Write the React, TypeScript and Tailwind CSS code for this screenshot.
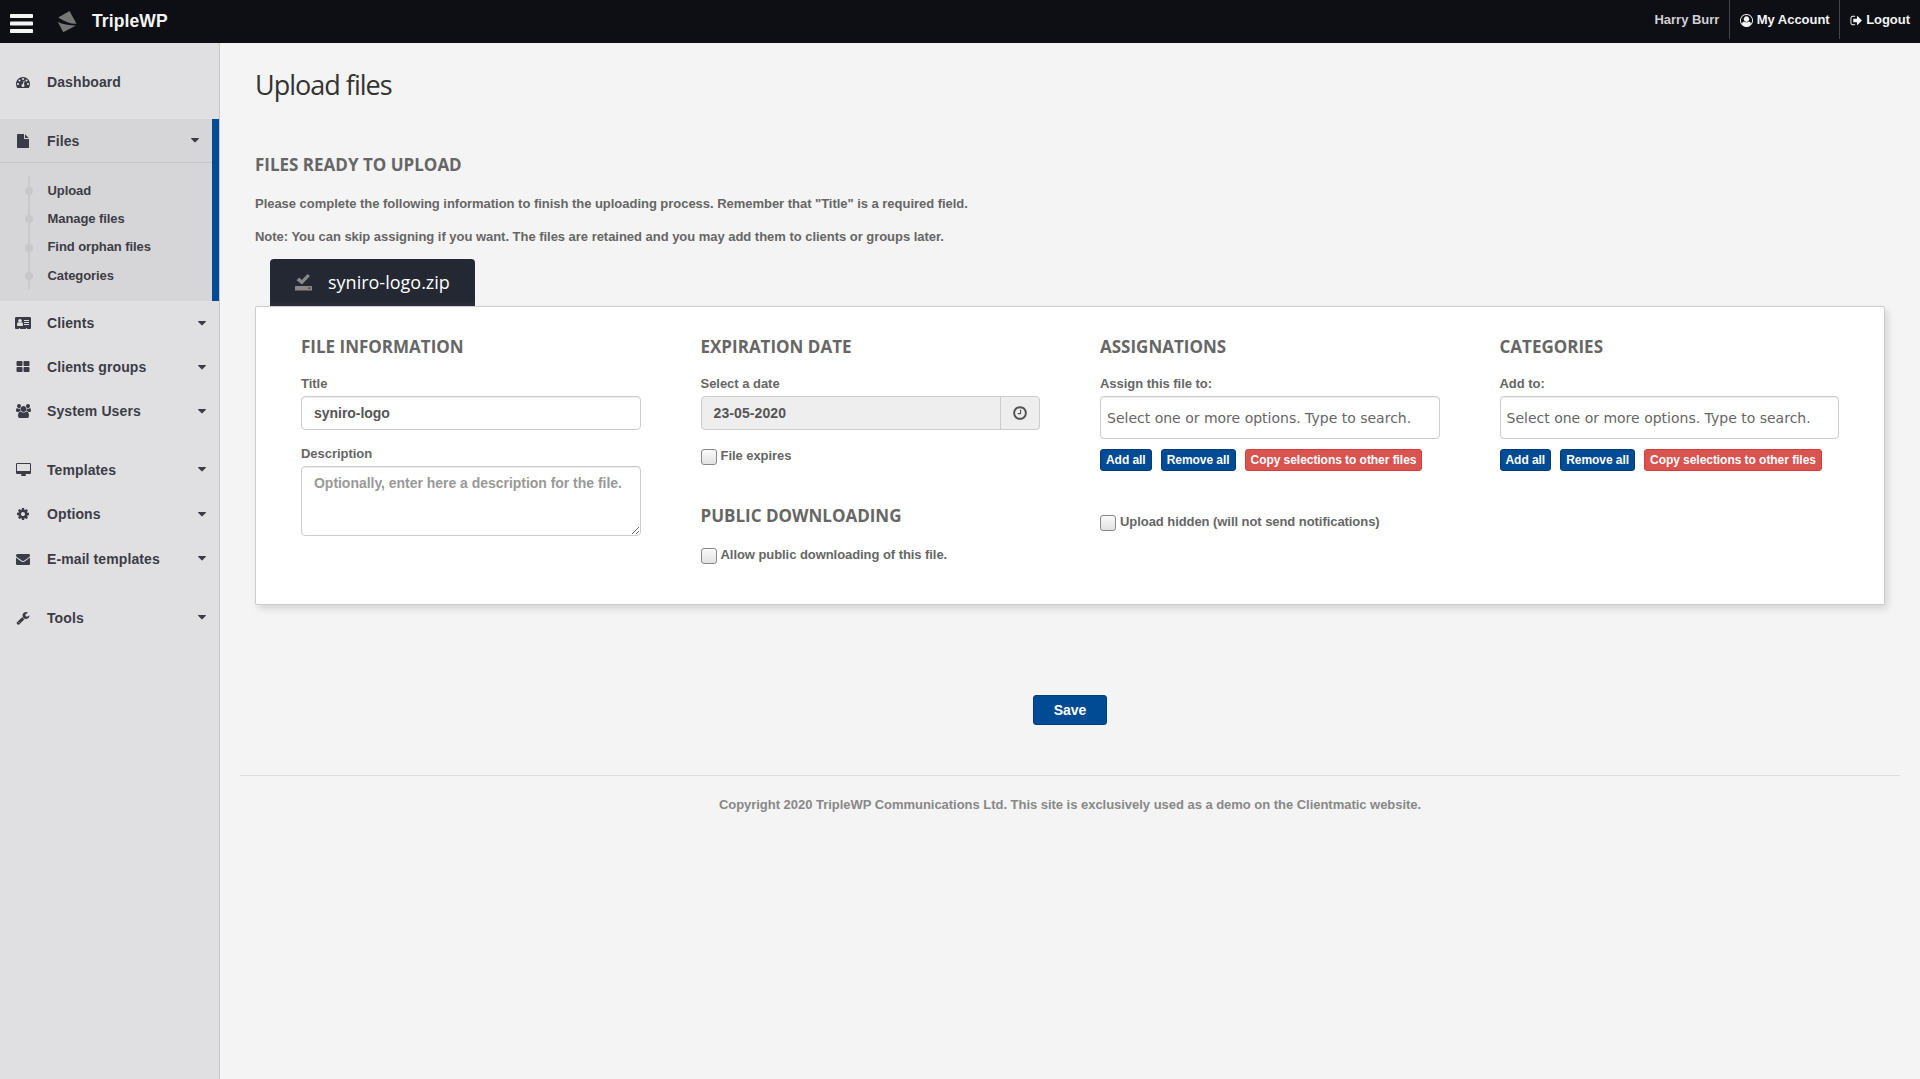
import React from 'react'

interface GlyphProps {
  d: string
  w?: number
  className?: string
}

// Icon glyphs share a 1792 unit em, only the width differs
const Glyph: React.FC<GlyphProps> = ({ d, w = 1792, className = '' }) => (
  <svg viewBox={`0 0 ${w} 1792`} fill="currentColor" className={`h-[14px] w-auto shrink-0 overflow-visible ${className}`}>
    <path d={d} />
  </svg>
)

const icons = {
  dashboard: 'M384 1152q0-53-37.5-90.5t-90.5-37.5-90.5 37.5-37.5 90.5 37.5 90.5 90.5 37.5 90.5-37.5 37.5-90.5zm192-448q0-53-37.5-90.5t-90.5-37.5-90.5 37.5-37.5 90.5 37.5 90.5 90.5 37.5 90.5-37.5 37.5-90.5zm428 481l101-382q6-26-7.5-48.5t-38.5-29.5-48 6.5-30 39.5l-101 382q-60 5-107 43.5t-63 98.5q-20 77 20 146t117 89 146-20 89-117q16-60-6-117t-72-91zm660-33q0-53-37.5-90.5t-90.5-37.5-90.5 37.5-37.5 90.5 37.5 90.5 90.5 37.5 90.5-37.5 37.5-90.5zm-640-640q0-53-37.5-90.5t-90.5-37.5-90.5 37.5-37.5 90.5 37.5 90.5 90.5 37.5 90.5-37.5 37.5-90.5zm448 192q0-53-37.5-90.5t-90.5-37.5-90.5 37.5-37.5 90.5 37.5 90.5 90.5 37.5 90.5-37.5 37.5-90.5zm320 448q0 261-141 483-19 29-54 29h-1402q-35 0-54-29-141-221-141-483 0-182 71-348t191-286 286-191 348-71 348 71 286 191 191 286 71 348z',
  file: 'M1152 512v-472q22 14 36 28l408 408q14 14 28 36h-472zm-128 32q0 40 28 68t68 28h544v1056q0 40-28 68t-68 28h-1344q-40 0-68-28t-28-68v-1600q0-40 28-68t68-28h800v544z',
  card: 'M1024 1131q0-64-9-117.5t-29.5-103-60.5-78-97-28.5q-6 4-30 18t-37.5 21.5-35.5 17.5-43 14.5-42 4.5-42-4.5-43-14.5-35.5-17.5-37.5-21.5-30-18q-57 0-97 28.5t-60.5 78-29.5 103-9 117.5 37 106.5 91 42.5h512q54 0 91-42.5t37-106.5zm-157-520q0-94-66.5-160.5t-160.5-66.5-160.5 66.5-66.5 160.5 66.5 160.5 160.5 66.5 160.5-66.5 66.5-160.5zm925 509v-64q0-14-9-23t-23-9h-576q-14 0-23 9t-9 23v64q0 14 9 23t23 9h576q14 0 23-9t9-23zm0-260v-56q0-15-10.5-25.5t-25.5-10.5h-568q-15 0-25.5 10.5t-10.5 25.5v56q0 15 10.5 25.5t25.5 10.5h568q15 0 25.5-10.5t10.5-25.5zm0-252v-64q0-14-9-23t-23-9h-576q-14 0-23 9t-9 23v64q0 14 9 23t23 9h576q14 0 23-9t9-23zm256-320v1216q0 66-47 113t-113 47h-352v-96q0-14-9-23t-23-9h-64q-14 0-23 9t-9 23v96h-768v-96q0-14-9-23t-23-9h-64q-14 0-23 9t-9 23v96h-352q-66 0-113-47t-47-113v-1216q0-66 47-113t113-47h1728q66 0 113 47t47 113z',
  groups: 'M832 1024v384q0 52-38 90t-90 38h-512q-52 0-90-38t-38-90v-384q0-52 38-90t90-38h512q52 0 90 38t38 90zm0-768v384q0 52-38 90t-90 38h-512q-52 0-90-38t-38-90v-384q0-52 38-90t90-38h512q52 0 90 38t38 90zm896 768v384q0 52-38 90t-90 38h-512q-52 0-90-38t-38-90v-384q0-52 38-90t90-38h512q52 0 90 38t38 90zm0-768v384q0 52-38 90t-90 38h-512q-52 0-90-38t-38-90v-384q0-52 38-90t90-38h512q52 0 90 38t38 90z',
  users: 'M593 896q-162 5-265 128h-134q-82 0-138-40.5t-56-118.5q0-353 124-353 6 0 43.5 21t97.5 42.5 119 21.5q67 0 133-23-5 37-5 66 0 139 81 256zm1071 637q0 120-73 189.5t-194 69.5h-874q-121 0-194-69.5t-73-189.5q0-53 3.5-103.5t14-109 26.5-108.5 43-97.5 62-81 85.5-53.5 111.5-20q10 0 43 21.5t73 48 107 48 135 21.5 135-21.5 107-48 73-48 43-21.5q61 0 111.5 20t85.5 53.5 62 81 43 97.5 26.5 108.5 14 109 3.5 103.5zm-1024-1277q0 106-75 181t-181 75-181-75-75-181 75-181 181-75 181 75 75 181zm704 384q0 159-112.5 271.5t-271.5 112.5-271.5-112.5-112.5-271.5 112.5-271.5 271.5-112.5 271.5 112.5 112.5 271.5zm576 225q0 78-56 118.5t-138 40.5h-134q-103-123-265-128 81-117 81-256 0-29-5-66 66 23 133 23 59 0 119-21.5t97.5-42.5 43.5-21q124 0 124 353zm-128-609q0 106-75 181t-181 75-181-75-75-181 75-181 181-75 181 75 75 181z',
  desktop: 'M1792 992v-832q0-13-9.5-22.5t-22.5-9.5h-1600q-13 0-22.5 9.5t-9.5 22.5v832q0 13 9.5 22.5t22.5 9.5h1600q13 0 22.5-9.5t9.5-22.5zm128-832v1088q0 66-47 113t-113 47h-544q0 37 16 77.5t32 71 16 43.5q0 26-19 45t-45 19h-512q-26 0-45-19t-19-45q0-14 16-44t32-70 16-78h-544q-66 0-113-47t-47-113v-1088q0-66 47-113t113-47h1600q66 0 113 47t47 113z',
  cog: 'M1152 896q0-106-75-181t-181-75-181 75-75 181 75 181 181 75 181-75 75-181zm512-109v222q0 12-8 23t-20 13l-185 28q-19 54-39 91 35 50 107 138 10 12 10 25t-9 23q-27 37-99 108t-94 71q-12 0-26-9l-138-108q-44 23-91 38-16 136-29 186-7 28-36 28h-222q-14 0-24.5-8.5t-11.5-21.5l-28-184q-49-16-90-37l-141 107q-10 9-25 9-14 0-25-11-126-114-165-168-7-10-7-23 0-12 8-23 15-21 51-66.5t54-70.5q-27-50-41-99l-183-27q-13-2-21-12.5t-8-23.5v-222q0-12 8-23t19-13l186-28q14-46 39-92-40-57-107-138-10-12-10-24 0-10 9-23 26-36 98.5-107.5t94.5-71.5q13 0 26 10l138 107q44-23 91-38 16-136 29-186 7-28 36-28h222q14 0 24.5 8.5t11.5 21.5l28 184q49 16 90 37l142-107q9-9 24-9 13 0 25 10 129 119 165 170 7 8 7 22 0 12-8 23-15 21-51 66.5t-54 70.5q26 50 41 98l183 28q13 2 21 12.5t8 23.5z',
  envelope: 'M1792 710v794q0 66-47 113t-113 47h-1472q-66 0-113-47t-47-113v-794q44 49 101 87 362 246 497 345 57 42 92.5 65.5t94.5 48 110 24.5h2q51 0 110-24.5t94.5-48 92.5-65.5q170-123 498-345 57-39 100-87zm0-294q0 79-49 151t-122 123q-376 261-468 325-10 7-42.5 31t-54 38.5-52 32.5-57.5 27-50 9h-2q-23 0-50-9t-57.5-27-52-32.5-54-38.5-42.5-31q-91-64-262-182.5t-205-142.5q-62-42-117-115.5t-55-136.5q0-78 41.5-130t118.5-52h1472q65 0 112.5 47t47.5 113z',
  wrench: 'M448 1472q0-26-19-45t-45-19-45 19-19 45 19 45 45 19 45-19 19-45zm644-420l-682 682q-37 37-90 37-52 0-91-37l-106-108q-38-36-38-90 0-53 38-91l681-681q39 98 114.5 173.5t173.5 114.5zm634-435q0 39-23 106-47 134-164.5 217.5t-258.5 83.5q-185 0-316.5-131.5t-131.5-316.5 131.5-316.5 316.5-131.5q58 0 121.5 16.5t107.5 46.5q16 11 16 28t-16 28l-293 169v224l193 107q5-3 79-48.5t135.5-81 70.5-35.5q15 0 23.5 10t8.5 25z',
  caret: 'M1408 704q0 26-19 45l-448 448q-19 19-45 19t-45-19l-448-448q-19-19-19-45t19-45 45-19h896q26 0 45 19t19 45z',
  account: 'M896 0q182 0 348 71t286 191 191 286 71 348q0 181-70.5 347t-190.5 286-286 191.5-349 71.5-349-71-285.5-191.5-190.5-286-71-347.5 71-348 191-286 286-191 348-71zm619 1351q149-205 149-455 0-156-61-298t-164-245-245-164-298-61-298 61-245 164-164 245-61 298q0 250 149 455 66-327 306-327 131 128 313 128t313-128q240 0 306 327zm-235-647q0-159-112.5-271.5t-271.5-112.5-271.5 112.5-112.5 271.5 112.5 271.5 271.5 112.5 271.5-112.5 112.5-271.5z',
  logout: 'M704 1440q0 4 1 20t.5 26.5-3 23.5-10 19.5-20.5 6.5h-320q-119 0-203.5-84.5t-84.5-203.5v-704q0-119 84.5-203.5t203.5-84.5h320q13 0 22.5 9.5t9.5 22.5q0 4 1 20t.5 26.5-3 23.5-10 19.5-20.5 6.5h-320q-66 0-113 47t-47 113v704q0 66 47 113t113 47h312l11.5 1 11.5 3 8 5.5 7 9 2 13.5zm928-544q0 26-19 45l-544 544q-19 19-45 19t-45-19-19-45v-288h-448q-26 0-45-19t-19-45v-384q0-26 19-45t45-19h448v-288q0-26 19-45t45-19 45 19l544 544q19 19 19 45z',
  clock: 'M1024 544v448q0 14-9 23t-23 9h-320q-14 0-23-9t-9-23v-64q0-14 9-23t23-9h224v-352q0-14 9-23t23-9h64q14 0 23 9t9 23zm416 352q0-148-73-273t-198-198-273-73-273 73-198 198-73 273 73 273 198 198 273 73 273-73 198-198 73-273zm224 0q0 209-103 385.5t-279.5 279.5-385.5 103-385.5-103-279.5-279.5-103-385.5 103-385.5 279.5-279.5 385.5-103 385.5 103 279.5 279.5 103 385.5z'
}

interface MenuItemProps {
  icon: string
  w?: number
  label: string
  caret?: boolean
  className?: string
}

const MenuItem: React.FC<MenuItemProps> = ({ icon, w, label, caret = true, className = '' }) => (
  <a className={`flex h-[44.2px] items-center pr-[10px] text-sm tracking-[0.1px] text-[#3c3c46] ${className}`}>
    <span className="mr-px flex w-[46px] items-center justify-center">
      <Glyph d={icon} w={w} />
    </span>
    <span className="flex-1">{label}</span>
    {caret && <Glyph d={icons.caret} className="-mt-px" />}
  </a>
)

const subItems = ['Upload', 'Manage files', 'Find orphan files', 'Categories']

const Sidebar = () => (
  <aside className="w-[220px] shrink-0 border-r border-[#c8c8ca] bg-[#e0e0e2] pt-[17px]">
    <MenuItem icon={icons.dashboard} label="Dashboard" caret={false} />
    <div className="mt-[14.8px] h-[182px] border-r-[7px] border-[#004b93] bg-[#d6d6d8]">
      <MenuItem icon={icons.file} label="Files" className="border-b border-[#c6c6c8]" />
      <div className="relative pt-[13px]">
        <div className="absolute left-[28px] top-[13px] h-[113px] w-[2px] bg-[#cacacc]"></div>
        {subItems.map((item) => (
          <a key={item} className="flex h-[28.4px] items-center text-[13px] tracking-[-0.08px] text-[#3c3c46]">
            <span className="relative ml-[25px] mr-[14.5px] mt-px size-2 rounded-full bg-[#c8c8ca]"></span>
            {item}
          </a>
        ))}
      </div>
    </div>
    <MenuItem icon={icons.card} w={2048} label="Clients" />
    <MenuItem icon={icons.groups} label="Clients groups" />
    <MenuItem icon={icons.users} w={1920} label="System Users" />
    <MenuItem icon={icons.desktop} w={1920} label="Templates" className="mt-[14px]" />
    <MenuItem icon={icons.cog} label="Options" className="mt-[0.6px]" />
    <MenuItem icon={icons.envelope} label="E-mail templates" />
    <MenuItem icon={icons.wrench} label="Tools" className="mt-[15px]" />
  </aside>
)

const Header = () => (
  <header className="flex h-[43px] items-start bg-[#0d0f14] text-[13px] text-[#f4f4f4]">
    <svg viewBox="0 0 23 19" fill="currentColor" className="ml-[10px] mt-[14px] h-[19px] w-[23px]">
      <rect width="23" height="4" rx="0.8" />
      <rect y="7.5" width="23" height="4" rx="0.8" />
      <rect y="15" width="23" height="4" rx="0.8" />
    </svg>
    <svg viewBox="0 0 20 22" fill="#777" className="ml-[24px] mt-[11px] h-[22px] w-5">
      <path d="M12.5 0L19.5 12.8Q12 13.5 1.2 6.5Z" />
      <path d="M0.8 10.8Q8 14.5 19 14.6L6.2 21.2Z" />
    </svg>
    <span className="ml-[15px] mt-[9px] text-[17.5px] leading-6 tracking-[0.1px]">TripleWP</span>
    <div className="ml-auto flex h-[39px] items-center leading-[41px]">
      <span className="px-[10px] text-[#d0d0d4]">Harry Burr</span>
      <a className="flex h-full items-center gap-[3.5px] border-l border-[#44464f] pr-[9.5px] pl-[10px]">
        <Glyph d={icons.account} className="mt-[2px] !h-[13px]" />
        My Account
      </a>
      <a className="flex h-full items-center gap-[3.5px] border-l border-[#44464f] pr-[10px] pl-[9.5px]">
        <Glyph d={icons.logout} className="mt-[2px] !h-[13px]" />
        Logout
      </a>
    </div>
  </header>
)

const Heading: React.FC<{ children: React.ReactNode }> = ({ children }) => (
  <h3 className="font-['Open_Sans',sans-serif] text-[17px] leading-5 font-bold tracking-normal uppercase">{children}</h3>
)

const Checkbox: React.FC<{ label: string }> = ({ label }) => (
  <label className="flex h-4 items-start gap-1">
    <span className="size-4 rounded-[3px] border border-[#888] bg-linear-to-b from-[#fafafa] to-[#e2e2e2]"></span>
    <span className="-mt-px leading-4 tracking-[-0.06px]">{label}</span>
  </label>
)

const SelectBox: React.FC<{ label: string }> = ({ label }) => (
  <>
    <label className="mt-[17px] block leading-5">{label}</label>
    <div className="mt-[2px] flex h-[43px] items-center rounded border border-[#ccc] bg-white px-[6px] font-['DejaVu_Sans',sans-serif] text-sm font-normal tracking-normal whitespace-nowrap text-[#666] shadow-[inset_0_1px_1px_rgba(0,0,0,0.075)]">
      Select one or more options. Type to search.
    </div>
    <div className="mt-[10px] flex gap-[9px] text-xs leading-5 tracking-[-0.05px] whitespace-nowrap text-white">
      <button className="rounded-[3px] border border-[#003d78] bg-[#004b93] px-[5px]">Add all</button>
      <button className="rounded-[3px] border border-[#003d78] bg-[#004b93] px-[5px]">Remove all</button>
      <button className="rounded-[3px] border border-[#d43f3a] bg-[#d9534f] px-[5px]">Copy selections to other files</button>
    </div>
  </>
)

const inputClass = 'block w-full rounded border border-[#ccc] px-3 text-sm text-[#555] shadow-[inset_0_1px_1px_rgba(0,0,0,0.075)] placeholder:text-[#999] outline-none'

const FileCard = () => (
  <section className="grid h-[299px] grid-cols-4 rounded-[2px] border border-[#ccc] bg-white px-[15px] pt-[30px] shadow-[3px_4px_7px_rgba(0,0,0,0.12)]">
    <div className="px-[30px]">
      <Heading>File information</Heading>
      <label className="mt-[17px] block leading-5">Title</label>
      <input className={`mt-[2px] h-[34px] ${inputClass}`} defaultValue="syniro-logo" />
      <label className="mt-[14px] block leading-5">Description</label>
      <textarea className={`mt-[2px] h-[70px] py-[6px] leading-5 ${inputClass}`} placeholder="Optionally, enter here a description for the file."></textarea>
    </div>
    <div className="px-[30px]">
      <Heading>Expiration date</Heading>
      <label className="mt-[17px] block leading-5">Select a date</label>
      <div className="mt-[2px] flex h-[34px] rounded border border-[#ccc] bg-[#eee] text-sm tracking-[0.1px] text-[#555]">
        <span className="flex flex-1 items-center px-3">23-05-2020</span>
        <span className="flex w-[39px] items-center justify-center border-l border-[#ccc]">
          <Glyph d={icons.clock} className="!h-4" />
        </span>
      </div>
      <div className="mt-[19px]">
        <Checkbox label="File expires" />
      </div>
      <div className="mt-[41px]">
        <Heading>Public downloading</Heading>
      </div>
      <div className="mt-[22px]">
        <Checkbox label="Allow public downloading of this file." />
      </div>
    </div>
    <div className="px-[30px]">
      <Heading>Assignations</Heading>
      <SelectBox label="Assign this file to:" />
      <div className="mt-[44px]">
        <Checkbox label="Upload hidden (will not send notifications)" />
      </div>
    </div>
    <div className="px-[30px]">
      <Heading>Categories</Heading>
      <SelectBox label="Add to:" />
    </div>
  </section>
)

const App: React.FC = () => {
  return (
    <div className="flex h-[1079px] flex-col bg-[#f4f4f4] font-['Liberation_Sans',Arial,sans-serif] text-[13px] font-bold tracking-[-0.03px] text-[#666]">
      <Header />
      <div className="flex flex-1">
        <Sidebar />
        <main className="flex-1 pt-[22px] pr-5 pl-5">
          <div className="px-[15px]">
            <h2 className="font-['Open_Sans',sans-serif] text-[27px] leading-10 font-normal tracking-[-1px] text-[#333]">Upload files</h2>
            <div className="mt-[50px]">
              <Heading>Files ready to upload</Heading>
            </div>
            <p className="mt-[19px] leading-5">
              Please complete the following information to finish the uploading process. Remember that "Title" is a required field.
            </p>
            <p className="mt-[13px] leading-5">
              Note: You can skip assigning if you want. The files are retained and you may add them to clients or groups later.
            </p>
            <div className="mt-3 ml-[15px] flex h-[47px] w-[205px] items-center rounded-t bg-[#232833] pb-px pl-[25px] font-['Open_Sans',sans-serif] text-lg font-normal tracking-normal text-white shadow-[inset_0_-3px_3px_rgba(70,60,75,0.4)]">
              <svg viewBox="0 0 17 17" fill="#888" className="mr-4 h-[17px] w-[17px]">
                <path d="M1.5 6.2L4.2 3.6L6.8 6L12.6 0L15 2L7 10.5Z" />
                <path fillRule="evenodd" d="M0.6 12H16.4L17 12.6V16.4H0V12.6ZM13.5 13.6V14.8H15.2V13.6Z" />
              </svg>
              <span>syniro-logo.zip</span>
            </div>
            <FileCard />
          </div>
          <div className="mt-[90px] flex justify-center">
            <button className="h-[30px] w-[74px] rounded-[3px] border border-[#003d78] bg-[#004b93] text-sm text-white">Save</button>
          </div>
          <footer className="mt-[50px] border-t border-[#ddd] pt-[19px] text-center leading-5 text-[#888]">
            Copyright 2020 TripleWP Communications Ltd. This site is exclusively used as a demo on the Clientmatic website.
          </footer>
        </main>
      </div>
    </div>
  )
}

export default App
